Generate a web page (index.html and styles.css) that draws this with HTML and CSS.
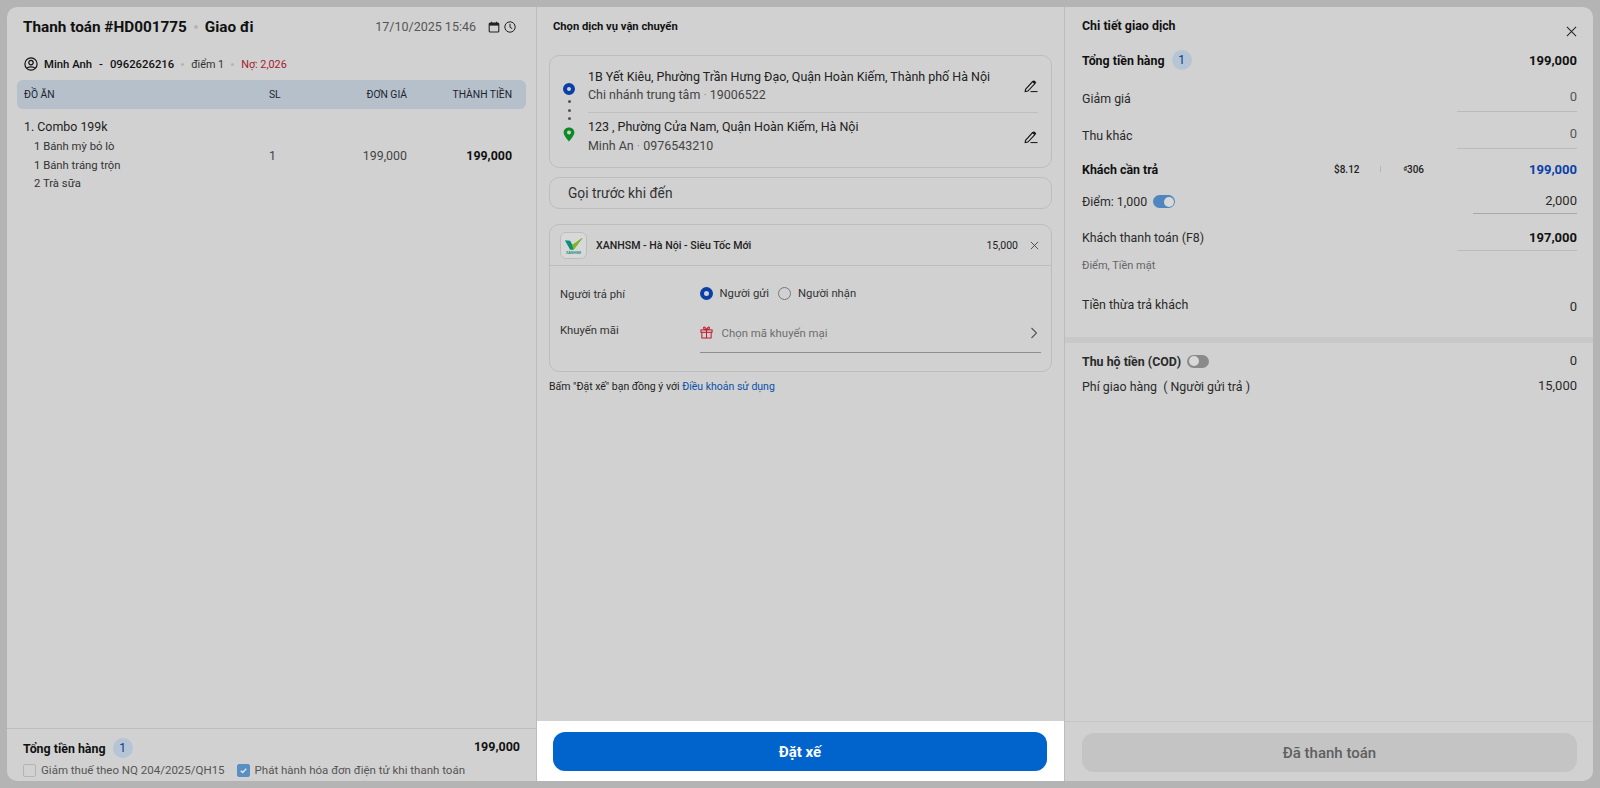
FILE: index.html
```html
<!DOCTYPE html>
<html lang="vi">
<head>
<meta charset="utf-8">
<title>Thanh toán</title>
<link rel="stylesheet" href="styles.css">
</head>
<body>
<main class="panel">
  <section class="col col-left">
    <header class="order-head">
      <h1 class="order-title">Thanh toán #HD001775<i class="dot dot-title"></i>Giao đi</h1>
      <div class="order-date">
        <span>17/10/2025 15:46</span>
        <svg class="ic-date" viewBox="0 0 12 12"><rect x="1.200" y="2" width="9.600" height="9" rx="1" fill="none" stroke="#222" stroke-width="1.100"/><rect x="1.200" y="2" width="9.600" height="2.600" fill="#222"/><path d="M3.500 .8v2M8.500 .8v2" stroke="#222" stroke-width="1.100"/></svg>
        <svg class="ic-date" viewBox="0 0 12 12"><circle cx="6" cy="6" r="5.200" fill="none" stroke="#222" stroke-width="1"/><path d="M6 2.800V6.300L8.200 7.600" fill="none" stroke="#222" stroke-width="1"/></svg>
      </div>
    </header>
    <div class="customer">
      <svg class="ic-user" viewBox="0 0 14 14"><circle cx="7" cy="7" r="6.100" fill="none" stroke="#111" stroke-width="1.200"/><circle cx="7" cy="5.600" r="2.200" fill="none" stroke="#111" stroke-width="1.200"/><path d="M3 11.200C4 9.300 10 9.300 11 11.200" fill="none" stroke="#111" stroke-width="1.200"/></svg>
      <b class="cust-name">Minh Anh</b><b class="cust-dash">-</b><b>0962626216</b><i class="dot"></i>
      <span class="cust-pts">điểm 1</span><i class="dot"></i><span class="cust-debt">Nợ: 2,026</span>
    </div>
    <div class="table-row table-head">
      <span>ĐỒ ĂN</span><span>SL</span><span class="num">ĐƠN GIÁ</span><span class="num">THÀNH TIỀN</span>
    </div>
    <div class="table-row table-item">
      <div class="item-name">
        <div class="item-main">1. Combo 199k</div>
        <div class="item-sub">1 Bánh mỳ bỏ lò</div>
        <div class="item-sub">1 Bánh tráng trộn</div>
        <div class="item-sub">2 Trà sữa</div>
      </div>
      <span>1</span><span class="num">199,000</span><b class="num">199,000</b>
    </div>
    <footer class="left-foot">
      <div class="left-total">
        <div class="label-badge"><b>Tổng tiền hàng</b><span class="badge">1</span></div>
        <b>199,000</b>
      </div>
      <div class="checks">
        <span class="check"><i class="box"></i>Giảm thuế theo NQ 204/2025/QH15</span>
        <span class="check"><i class="box box-on"><svg viewBox="0 0 14 14"><path d="M3.500 7.200 6 9.600 10.500 4.800" fill="none" stroke="#e8e8e8" stroke-width="1.700"/></svg></i>Phát hành hóa đơn điện tử khi thanh toán</span>
      </div>
    </footer>
  </section>

  <section class="col col-mid">
    <div class="mid-body">
      <h2 class="col-title">Chọn dịch vụ vận chuyển</h2>
      <div class="card addr-card">
        <div class="addr-marks">
          <i class="ring"></i><i class="pip"></i><i class="pip"></i><i class="pip"></i>
          <svg class="ic-pin" viewBox="0 0 12 15"><path fill-rule="evenodd" d="M6 .5C2.900.5.600 2.800.600 5.600.600 9 6 14.500 6 14.500S11.400 9 11.400 5.600C11.400 2.800 9.100.5 6 .5ZM6 3.600a2 2 0 1 1 0 4 2 2 0 0 1 0-4Z" fill="#0b8a25"/></svg>
        </div>
        <div class="addr-list">
          <div class="addr addr-first">
            <div>
              <div class="addr-line">1B Yết Kiêu, Phường Trần Hưng Đạo, Quận Hoàn Kiếm, Thành phố Hà Nội</div>
              <div class="addr-who">Chi nhánh trung tâm <span class="sep">·</span> 19006522</div>
            </div>
            <svg class="ic-edit" viewBox="0 0 14 14"><path d="M1.500 10.400 8.600 2.600l2.300 1.900-7 7.600-2.700.4z" fill="none" stroke="#111" stroke-width="1.100"/><path d="M8.800 2.400 9.900 1.200l2.400 2-1.100 1.300z" fill="#111"/><path d="M6.500 12.600h7" stroke="#111" stroke-width="1"/></svg>
          </div>
          <div class="addr addr-second">
            <div>
              <div class="addr-line">123 , Phường Cửa Nam, Quận Hoàn Kiếm, Hà Nội</div>
              <div class="addr-who">Minh An <span class="sep">·</span> 0976543210</div>
            </div>
            <svg class="ic-edit" viewBox="0 0 14 14"><path d="M1.500 10.400 8.600 2.600l2.300 1.900-7 7.600-2.700.4z" fill="none" stroke="#111" stroke-width="1.100"/><path d="M8.800 2.400 9.900 1.200l2.400 2-1.100 1.300z" fill="#111"/><path d="M6.500 12.600h7" stroke="#111" stroke-width="1"/></svg>
          </div>
        </div>
      </div>
      <div class="note">Gọi trước khi đến</div>
      <div class="card carrier">
        <div class="carrier-head">
          <span class="logo">
            <svg viewBox="0 0 26 26"><path d="M4 7.500 9.500 8 12 12.500 22.500 5 13 17.500H9.500z" fill="#0f8f7a"/><path d="M11.500 12.500 22.500 5 13 17.500z" fill="#86b81c"/><text x="13" y="22" text-anchor="middle" class="logo-text">XANHSM</text></svg>
          </span>
          <span class="carrier-name">XANHSM - Hà Nội - Siêu Tốc Mới</span>
          <span class="carrier-fee">15,000</span>
          <svg class="ic-x-sm" viewBox="0 0 10 10"><path d="M1 1 9 9M9 1 1 9" stroke="#444" stroke-width="1"/></svg>
        </div>
        <div class="carrier-body">
          <div class="form-row fee-row">
            <span class="form-label fee-label">Người trả phí</span>
            <div class="radios">
              <span class="radio-on"></span><span class="radio-text">Người gửi</span>
              <span class="radio-off"></span><span class="radio-text">Người nhận</span>
            </div>
          </div>
          <div class="form-row promo-row">
            <span class="form-label promo-label">Khuyến mãi</span>
            <div class="promo">
              <svg class="ic-gift" viewBox="0 0 14 14"><g fill="none" stroke="#c01c2e" stroke-width="1.100"><rect x="1" y="4.200" width="12" height="2.600"/><path d="M2 6.800V13h10V6.800M7 4.200V13M7 4C5 4 3.800 3.200 3.800 2 3.800.8 6 .5 7 4ZM7 4c2 0 3.200-.8 3.200-2C10.200.8 8 .5 7 4Z"/></g></svg>
              <span class="promo-text">Chọn mã khuyến mại</span>
              <svg class="ic-chev" viewBox="0 0 8 12"><path d="M1.500 1 6.500 6 1.500 11" fill="none" stroke="#555" stroke-width="1.100"/></svg>
            </div>
          </div>
        </div>
      </div>
      <p class="terms">Bấm "Đặt xế" bạn đồng ý với <a href="#" class="terms-link">Điều khoản sử dụng</a></p>
    </div>
    <div class="action action-live"><button class="btn btn-primary" type="button">Đặt xế</button></div>
  </section>

  <section class="col col-right">
    <div class="right-top">
      <div class="right-title-row">
        <h2 class="col-title">Chi tiết giao dịch</h2>
        <svg class="ic-close" viewBox="0 0 12 12"><path d="M1 1 11 11M11 1 1 11" stroke="#222" stroke-width="1.100"/></svg>
      </div>
      <div class="line line-total">
        <div class="label-badge"><b>Tổng tiền hàng</b><span class="badge">1</span></div><b class="amount">199,000</b>
      </div>
      <div class="line line-input">
        <span class="input-label">Giảm giá</span><span class="field field-wide muted">0</span>
      </div>
      <div class="line line-input">
        <span class="input-label">Thu khác</span><span class="field field-wide muted">0</span>
      </div>
      <div class="line line-due">
        <b class="due-label">Khách cần trả</b>
        <span class="rates"><span>$8.12</span><i class="rate-sep"></i><span><sup class="dong">₫</sup>306</span></span>
        <b class="due-val amount">199,000</b>
      </div>
      <div class="line line-points">
        <span class="points-label">Điểm: 1,000<i class="toggle toggle-on"></i></span><span class="field field-narrow amount">2,000</span>
      </div>
      <div class="line line-paid">
        <span>Khách thanh toán (F8)</span><b class="field field-paid field-strong amount">197,000</b>
      </div>
      <div class="pay-method">Điểm, Tiền mặt</div>
      <div class="line line-change"><span>Tiền thừa trả khách</span><span class="change-val amount">0</span></div>
    </div>
    <div class="band"></div>
    <div class="right-cod">
      <div class="line line-cod"><span class="points-label"><b>Thu hộ tiền (COD)</b><i class="toggle"></i></span><span class="cod-val amount">0</span></div>
      <div class="line line-ship"><span>Phí giao hàng&nbsp; ( Người gửi trả )</span><span class="cod-val amount">15,000</span></div>
    </div>
    <div class="action action-right"><button class="btn btn-disabled" type="button">Đã thanh toán</button></div>
  </section>
</main>
</body>
</html>
```

FILE: styles.css
```css
* { box-sizing: border-box; }
html, body { height: 100%; }
body {
  margin: 0;
  padding: 7px;
  background: #b4b4b4;
  font-family: Roboto, "Noto Sans", sans-serif;
  font-size: 13px;
  color: #1e1e1e;
  overflow: hidden;
}
h1, h2, p { margin: 0; }
i { font-style: normal; }
b { font-weight: 700; }

.panel {
  display: grid;
  grid-template-columns: 529px 529px 1fr;
  height: 774px;
  background: #d1d1d1;
  border-radius: 10px;
  overflow: hidden;
}
.col { display: flex; flex-direction: column; min-width: 0; }
.col-mid { border-left: 1px solid #bcbcbc; border-right: 1px solid #bcbcbc; }

/* Left */
.order-head {
  display: flex; justify-content: space-between; align-items: center;
  height: 39px; padding: 0 20px 0 16px;
}
.order-title { display: flex; align-items: center; font-size: 15.300px; font-weight: 700; color: #111; }
.dot { display: inline-block; width: 3px; height: 3px; border-radius: 50%; background: #b4b4b4; margin: 0 7px; }
.dot-title { width: 4px; height: 4px; }
.order-date { display: flex; align-items: center; gap: 4px; font-size: 12.500px; color: #555; }
.order-date span { margin-right: 8px; }
.ic-date { width: 12px; height: 12px; }
.customer {
  display: flex; align-items: center;
  height: 14px; margin-top: 11px; padding-left: 17px;
  font-size: 11.300px;
}
.customer b { font-weight: 500; color: #111; }
.ic-user { width: 14px; height: 14px; margin-right: 6px; }
.cust-dash { margin: 0 7px; }
.cust-pts { font-size: 10.800px; color: #333; }
.cust-debt { font-size: 10.800px; color: #a3202f; }

.table-row {
  display: grid;
  grid-template-columns: 245px 60px 78px 105px;
  align-items: center;
}
.table-head {
  height: 29px; margin: 9px 10px 0; padding: 0 15px 0 7px;
  background: #b5c0cb; border-radius: 6px;
  font-size: 10.300px; color: #1d2430;
}
.num { text-align: right; }
.table-item {
  margin: 0 10px; padding: 9px 14px 0 7px;
  font-size: 12.400px;
}
.table-item > span { color: #444; }
.table-item > b { color: #111; }
.item-main { font-size: 12.400px; line-height: 18px; margin-bottom: 2px; }
.item-sub { font-size: 11.300px; line-height: 18.500px; padding-left: 10px; color: #333; }

.left-foot {
  margin-top: auto; height: 53px;
  border-top: 1px solid #bdbdbd;
  padding: 9px 16px 0;
}
.left-total { display: flex; justify-content: space-between; align-items: center; height: 20px; font-size: 12.500px; color: #111; }
.left-total > b { margin-bottom: 3px; }
.label-badge { display: flex; align-items: center; gap: 7px; font-size: 12.400px; }
.badge {
  display: inline-flex; align-items: center; justify-content: center;
  width: 20px; height: 20px; border-radius: 50%;
  background: #b5c5d6; color: #0b3a88; font-size: 12px; font-weight: 400;
}
.checks { display: flex; gap: 12px; margin-top: 5px; font-size: 11.500px; color: #555; }
.check { display: flex; align-items: center; gap: 5px; }
.box { display: block; width: 13px; height: 13px; border: 1px solid #b4b4b4; border-radius: 2px; }
.box-on { background: #5a8fc4; border-color: #5a8fc4; }
.box-on svg { display: block; width: 11px; height: 11px; }

/* Middle */
.mid-body { flex: 1; padding: 0 12px; }
.col-title { font-size: 11.200px; font-weight: 700; color: #111; line-height: 14px; padding-top: 13px; padding-left: 4px; }
.card { border: 1px solid #bdbdbd; border-radius: 10px; }
.addr-card {
  display: flex; height: 113px; margin-top: 21px;
  padding: 0 13px;
}
.addr-marks { display: flex; flex-direction: column; align-items: center; width: 12px; padding-top: 27px; margin-right: 13px; }
.ring { display: block; width: 12px; height: 12px; border: 4px solid #0a3fa8; border-radius: 50%; margin-bottom: 5px; }
.pip { display: block; width: 3px; height: 3px; border-radius: 50%; background: #555; margin-bottom: 5.500px; }
.ic-pin { width: 12px; height: 15px; margin-top: 1px; }
.addr-list { flex: 1; min-width: 0; }
.addr { display: flex; justify-content: space-between; align-items: center; }
.addr-first { height: 57px; padding-top: 4px; border-bottom: 1px solid #bfbfbf; }
.addr-second { height: 48px; padding-bottom: 1px; }
.addr-line { font-size: 12.460px; line-height: 18.500px; color: #222; }
.addr-who { font-size: 12.460px; line-height: 18.500px; color: #444; }
.sep { color: #9a9a9a; }
.ic-edit { width: 14px; height: 14px; }
.note {
  display: flex; align-items: center;
  height: 32px; margin-top: 9px; padding-left: 18px;
  border: 1px solid #bdbdbd; border-radius: 10px;
  font-size: 13.750px; color: #333;
}
.carrier { margin-top: 15px; height: 148px; }
.carrier-head {
  display: flex; align-items: center;
  height: 41px; padding: 0 12px 0 10px;
  border-bottom: 1px solid #bdbdbd;
}
.logo {
  display: block; width: 27px; height: 27px; margin-right: 9px;
  border: 1px solid #bdbdbd; border-radius: 6px; background: #d8d8d8;
}
.logo svg { display: block; width: 25px; height: 25px; }
.logo-text { font-family: "Liberation Sans", sans-serif; font-size: 3.600px; font-weight: 700; fill: #0f8f7a; }
.carrier-name { flex: 1; font-size: 10.600px; font-weight: 500; color: #222; }
.carrier-fee { font-size: 10.500px; color: #222; margin-right: 12px; }
.ic-x-sm { width: 9px; height: 9px; }
.carrier-body { padding: 0 10px; }
.form-row { display: flex; }
.form-label { width: 139.500px; flex: none; font-size: 11.300px; color: #333; }
.fee-row { margin-top: 19px; align-items: center; height: 16px; }
.fee-label { padding-top: 2px; }
.radios { display: flex; align-items: center; font-size: 11.300px; color: #333; }
.radio-on, .radio-off { display: block; width: 13px; height: 13px; border-radius: 50%; }
.radio-on { border: 4px solid #0a3fa8; margin-right: 7px; }
.radio-off { border: 1px solid #777; margin: 0 7px 0 9px; }
.promo-row { margin-top: 14px; }
.promo-label { padding-top: 9px; }
.promo {
  flex: 1; display: flex; align-items: center;
  height: 38px; padding-bottom: 2px; border-bottom: 1px solid #8f8f8f;
}
.ic-gift { width: 13px; height: 13px; margin-right: 9px; }
.promo-text { flex: 1; font-size: 11.400px; color: #6e6e6e; }
.ic-chev { width: 8px; height: 12px; margin-right: 3px; }
.terms { margin-top: 8px; font-size: 10.500px; color: #222; }
.terms-link { color: #0b50a8; text-decoration: none; }

.action { height: 60px; padding: 11px 16px 9px; border-top: 1px solid #c6c6c6; }
.action-live { background: #fff; border-top: 0; margin-top: auto; padding-right: 17px; }
.action-right { padding-left: 17px; }
.btn {
  display: block; width: 100%; height: 39px;
  border: 0; border-radius: 12px;
  font-family: inherit; font-size: 15px; font-weight: 700;
}
.btn-primary { background: #0064cc; color: #fff; }
.btn-disabled { background: #c4c4c4; color: #5f5f5f; font-weight: 500; }

/* Right */
.right-top { padding: 0 16px 0 17px; height: 330px; }
.right-title-row { position: relative; }
.col-right .col-title { padding-left: 0; padding-top: 12px; font-size: 12.400px; }
.ic-close { position: absolute; right: 0; top: 19px; width: 11px; height: 11px; }
.line { display: flex; justify-content: space-between; align-items: center; font-size: 12.400px; color: #2a2a2a; }
.amount { font-size: 13px; }
.line-total { height: 20px; margin-top: 17px; }
.line-total b { color: #111; }
.line-input { height: 26px; align-items: flex-start; }
.input-label { padding-top: 2px; }
.line-total + .line-input { margin-top: 19px; }
.line-input + .line-input { margin-top: 11px; }
.field { display: block; text-align: right; border-bottom: 1px solid #bbb; height: 23px; font-size: 13px; }
.field-wide { width: 120px; }
.field-paid { width: 120px; height: 21px; }
.field-narrow { width: 104px; height: 21px; border-bottom-color: #a8a8a8; }
.field-strong { color: #111; }
.muted { color: #555; }
.line-due { height: 20px; margin-top: 7px; color: #111; }
.due-label { width: 252px; }
.rates { display: flex; align-items: center; font-size: 10px; font-weight: 500; color: #222; margin-right: auto; }
.dong { font-size: 6px; line-height: 0; vertical-align: 3px; }
.rate-sep { display: block; width: 1px; height: 6px; background: #b5b5b5; margin: 0 23px 0 20px; }
.due-val { color: #0a3fa8; }
.line-points { height: 24px; margin-top: 14px; align-items: flex-start; }
.points-label { display: flex; align-items: center; gap: 6px; height: 17px; }
.line-paid { height: 24px; margin-top: 13px; align-items: flex-start; }
.toggle { display: block; position: relative; width: 22px; height: 13px; border-radius: 7px; background: #8a8a8a; }
.toggle::after { content: ""; position: absolute; left: 1.500px; top: 1.500px; width: 10px; height: 10px; border-radius: 50%; background: #d8d8d8; }
.toggle-on { background: #4f86c0; }
.toggle-on::after { left: auto; right: 1.500px; }
.pay-method { margin-top: 5px; font-size: 11px; color: #666; }
.line-change { margin-top: 25px; align-items: flex-start; height: 20px; }
.change-val { padding-top: 2px; }
.band { height: 6px; background: #c8c8c8; }
.right-cod { padding: 9px 16px 0 17px; flex: 1; }
.line-cod { height: 18px; }
.line-ship { margin-top: 7px; height: 18px; }
.cod-val { margin-top: -2px; }
```
